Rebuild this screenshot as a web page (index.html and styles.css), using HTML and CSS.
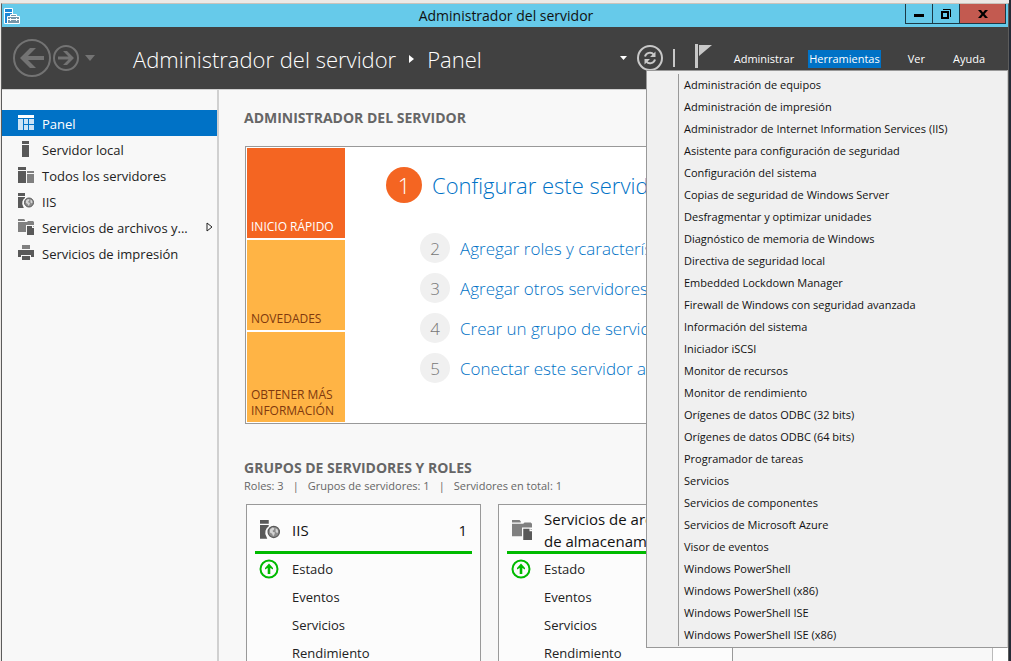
FILE: index.html
```html
<!DOCTYPE html>
<html lang="es">
<head>
<meta charset="utf-8">
<title>Administrador del servidor</title>
<link rel="stylesheet" href="styles.css">
</head>
<body>
<svg class="defs" aria-hidden="true">
  <symbol id="i-iis" viewBox="0 0 16 16">
    <path d="M0 0h7v3H0zM0 4h7v1a6 6 0 0 0-2 8l.8 2H0z" fill="#595959"/>
    <circle cx="11" cy="9.500" r="4.500" fill="#8c8c8c" stroke="#595959"/>
    <path d="M8 7.500l2-1.500 1.500.5-.5 1.500-1 .5.500 1 1.500.5-.5 1.500-1 1.500-.8-2-1.700-1zM12.500 6.500l1.500 1 .5 1.500-.5 1.500-1.500-1z" fill="#d4d4d4"/>
  </symbol>
  <symbol id="i-files" viewBox="0 0 16 16">
    <path d="M0 0h6l1 1v1H0zM0 3h9l1-1h5l1 1v3h-8v7H0z" fill="#808080"/>
    <path d="M9 7h5v2h2v7H9zM15 7l1 1h-1z" fill="#595959"/>
  </symbol>
  <symbol id="i-up" viewBox="0 0 20 20">
    <circle cx="10" cy="10" r="8.500" fill="none" stroke="#00ba00" stroke-width="2"/>
    <path d="M10 4.500l4 4.500v1.500l-2.700-1.500v6H8.700V9L6 10.500V9z" fill="#00ba00"/>
  </symbol>
</svg>
<div class="window">
  <header class="titlebar">
    <svg class="app-icon" viewBox="0 0 16 16" aria-hidden="true">
      <path d="M.5.500h8v15h-8z" fill="#1c87d6" stroke="#fff"/><path d="M1 4.500h7" stroke="#fff"/>
      <path d="M6.500 8.500V6.500h6v2M3.500 8.500h12v7h-12z" fill="#7896a8" stroke="#fff"/><path d="M4 11.500h11M6.500 10v3M12.500 10v3" stroke="#fff"/>
    </svg>
    <span class="caption">Administrador del servidor</span>
    <div class="controls">
      <button class="ctl" aria-label="Minimizar"><svg width="12" height="12"><path d="M1 6h10v3H1z"/></svg></button>
      <button class="ctl" aria-label="Restaurar"><svg width="12" height="12"><path d="M3 1.500h7.500V9" fill="none" stroke="#000"/><path d="M2 4h6v6H2z" fill="none" stroke="#000" stroke-width="2"/></svg></button>
      <button class="ctl close" aria-label="Cerrar"><svg width="12" height="12"><path d="M1 2h3l2 2.500L8 2h3L7.500 6 11 10H8L6 7.500 4 10H1l3.500-4z"/></svg></button>
    </div>
  </header>
  <div class="topbar">
    <div class="history">
      <button class="icon-btn" aria-label="Atrás"><svg width="38" height="38" viewBox="0 0 38 38"><circle cx="19" cy="19" r="18" fill="none" stroke="#737373" stroke-width="2"/><path d="M7 19L17 9h6l-8 8H31v4H15l8 8h-6z" fill="#737373"/></svg></button>
      <button class="icon-btn" aria-label="Adelante"><svg width="26" height="26" viewBox="0 0 26 26"><circle cx="13" cy="13" r="12" fill="none" stroke="#737373" stroke-width="2"/><path d="M21 13l-7 7h-4l5.500-5.500H5v-3h10.500L10 6h4z" fill="#737373"/></svg></button>
      <button class="icon-btn drop" aria-label="Historial"><svg width="10" height="6"><path d="M0 0h10L5 6z" fill="#737373"/></svg></button>
    </div>
    <div class="breadcrumb"><span>Administrador del servidor</span><svg width="5" height="8"><path d="M0 0l5 4-5 4z" fill="#fff"/></svg><span>Panel</span></div>
    <div class="tools">
      <button class="icon-btn" aria-label="Opciones"><svg width="7" height="4"><path d="M0 0h7L3.500 4z" fill="#fff"/></svg></button>
      <button class="icon-btn" aria-label="Actualizar"><svg width="26" height="26" viewBox="0 0 26 26"><circle cx="13" cy="13" r="12" fill="none" stroke="#c8c8c8" stroke-width="2"/><path d="M8 11.500c1-4 6.500-5 8.500-2M18 14.500c-1 4-6.500 5-8.500 2" fill="none" stroke="#c8c8c8" stroke-width="2"/><path d="M18.500 6.500v5.500H13zM7.500 19.500V14H13z" fill="#c8c8c8"/></svg></button>
      <span class="divider"></span>
      <button class="icon-btn flag" aria-label="Notificaciones"><svg width="17" height="24"><path d="M0 0h3v24H0zM4 1h13L4 12z" fill="#c8c8c8"/></svg></button>
    </div>
    <nav class="menubar">
      <button>Administrar</button><button class="open">Herramientas</button><button>Ver</button><button>Ayuda</button>
    </nav>
    <div class="dropdown">
      <ul>
        <li><a href="#">Administración de equipos</a></li>
        <li><a href="#">Administración de impresión</a></li>
        <li><a href="#">Administrador de Internet Information Services (IIS)</a></li>
        <li><a href="#">Asistente para configuración de seguridad</a></li>
        <li><a href="#">Configuración del sistema</a></li>
        <li><a href="#">Copias de seguridad de Windows Server</a></li>
        <li><a href="#">Desfragmentar y optimizar unidades</a></li>
        <li><a href="#">Diagnóstico de memoria de Windows</a></li>
        <li><a href="#">Directiva de seguridad local</a></li>
        <li><a href="#">Embedded Lockdown Manager</a></li>
        <li><a href="#">Firewall de Windows con seguridad avanzada</a></li>
        <li><a href="#">Información del sistema</a></li>
        <li><a href="#">Iniciador iSCSI</a></li>
        <li><a href="#">Monitor de recursos</a></li>
        <li><a href="#">Monitor de rendimiento</a></li>
        <li><a href="#">Orígenes de datos ODBC (32 bits)</a></li>
        <li><a href="#">Orígenes de datos ODBC (64 bits)</a></li>
        <li><a href="#">Programador de tareas</a></li>
        <li><a href="#">Servicios</a></li>
        <li><a href="#">Servicios de componentes</a></li>
        <li><a href="#">Servicios de Microsoft Azure</a></li>
        <li><a href="#">Visor de eventos</a></li>
        <li><a href="#">Windows PowerShell</a></li>
        <li><a href="#">Windows PowerShell (x86)</a></li>
        <li><a href="#">Windows PowerShell ISE</a></li>
        <li><a href="#">Windows PowerShell ISE (x86)</a></li>
      </ul>
    </div>
  </div>
  <div class="body">
    <nav class="sidebar">
      <a class="current" href="#"><svg width="16" height="16"><path d="M0 0h16v3H0z" fill="#fff"/><path d="M0 4h5v11H0zM6 4h4v5H6zM11 4h5v5h-5zM6 10h4v5H6zM11 10h5v5h-5z" fill="#cce3f5"/></svg><span>Panel</span></a>
      <a href="#"><svg width="16" height="16"><path d="M4 0h7v3H4zM4 4h7v12H4z" fill="#595959"/></svg><span>Servidor local</span></a>
      <a href="#"><svg width="16" height="16"><path d="M0 0h8v3H0zM0 4h8v12H0z" fill="#595959"/><path d="M9 4h7v2H9zM9 7h7v9H9z" fill="#808080"/></svg><span>Todos los servidores</span></a>
      <a href="#"><svg width="16" height="16"><use href="#i-iis"/></svg><span>IIS</span></a>
      <a href="#"><svg width="16" height="16"><use href="#i-files"/></svg><span>Servicios de archivos y...</span><svg class="expand" width="7" height="10"><path d="M1 1l5 4-5 4z" fill="none" stroke="#222"/></svg></a>
      <a href="#"><svg width="16" height="16"><path d="M4 0h8v4H4z" fill="#808080"/><path d="M0 5h16v7h-3v-2H3v2H0zM4 11h8v4H4z" fill="#595959"/></svg><span>Servicios de impresión</span></a>
    </nav>
    <main>
      <h1>ADMINISTRADOR DEL SERVIDOR</h1>
      <section class="welcome">
        <div class="tiles">
          <button class="tile active">INICIO RÁPIDO</button>
          <button class="tile">NOVEDADES</button>
          <button class="tile">OBTENER MÁS INFORMACIÓN</button>
        </div>
        <div class="steps">
          <a class="step first" href="#"><b>1</b><span>Configurar este servidor local</span></a>
          <a class="step" href="#"><b>2</b><span>Agregar roles y características</span></a>
          <a class="step" href="#"><b>3</b><span>Agregar otros servidores para administrar</span></a>
          <a class="step" href="#"><b>4</b><span>Crear un grupo de servidores</span></a>
          <a class="step" href="#"><b>5</b><span>Conectar este servidor a servicios en la nube</span></a>
        </div>
      </section>
      <h2>GRUPOS DE SERVIDORES Y ROLES</h2>
      <p class="summary"><span>Roles: 3</span><span>|</span><span>Grupos de servidores: 1</span><span>|</span><span>Servidores en total: 1</span></p>
      <div class="cards">
        <article class="card">
          <div class="card-head"><svg width="20" height="20"><use href="#i-iis"/></svg><h3>IIS</h3><span>1</span></div>
          <ul>
            <li><svg width="20" height="20"><use href="#i-up"/></svg><a href="#">Estado</a></li>
            <li><a href="#">Eventos</a></li><li><a href="#">Servicios</a></li><li><a href="#">Rendimiento</a></li>
          </ul>
        </article>
        <article class="card">
          <div class="card-head"><svg width="20" height="20"><use href="#i-files"/></svg><h3>Servicios de archivos y<br>de almacenamiento</h3><span>1</span></div>
          <ul>
            <li><svg width="20" height="20"><use href="#i-up"/></svg><a href="#">Estado</a></li>
            <li><a href="#">Eventos</a></li><li><a href="#">Servicios</a></li><li><a href="#">Rendimiento</a></li>
          </ul>
        </article>
      </div>
    </main>
    <div class="scroll-track"></div>
  </div>
</div>
</body>
</html>
```
FILE: styles.css
```css
* { box-sizing: border-box; }
body {
  margin: 0;
  height: 100vh;
  overflow: hidden;
  padding: 3px 2px 0 1px;
  background: linear-gradient(90deg, #ece9e6 0 50%, #252b36 50%);
  font-family: "Open Sans", "Noto Sans", sans-serif;
  color: #222;
}
a { color: inherit; text-decoration: none; }
button { font: inherit; border: 0; padding: 0; background: none; color: inherit; }
ul, h1, h2, h3, p { margin: 0; padding: 0; list-style: none; }
svg { display: block; flex: none; }
.defs { position: absolute; width: 0; height: 0; }
.window {
  display: flex;
  flex-direction: column;
  height: 100%;
  border: 1px solid #5c5c5c;
  border-top-color: #c9c3bc;
  border-bottom: 0;
  box-shadow: 0 -3px #ece9e6;
  background: #f8f8f8;
}
.titlebar {
  display: grid;
  grid-template-columns: 1fr auto 1fr;
  align-items: center;
  flex: none;
  height: 23px;
  background: #66caea;
  padding-left: 2px;
}
.app-icon { width: 16px; height: 16px; }
.caption { font-size: 14px; line-height: 22px; color: #111; }
.controls { display: flex; justify-content: flex-end; align-self: start; padding-right: 2px; }
.ctl {
  display: flex;
  align-items: center;
  justify-content: center;
  width: 28px;
  height: 20px;
  border: 1px solid #1b3a47;
  border-top: 0;
  margin-left: -1px;
}
.close { width: 47px; background: #c35a50; }
.topbar {
  position: relative;
  display: flex;
  align-items: center;
  flex: none;
  height: 63px;
  border-bottom: 1px solid #d0d0d0;
  background: #414141;
  color: #fff;
  padding: 0 22px 0 11px;
}
.history { display: flex; align-items: center; gap: 2px; }
.drop { margin-left: 4px; }
.breadcrumb { display: flex; align-items: center; gap: 13px; margin-left: 38px; padding-top: 2px; font-size: 22px; font-weight: 300; line-height: 32px; white-space: nowrap; }
.tools { display: flex; align-items: center; gap: 10px; margin-left: auto; }
.divider { width: 2px; height: 18px; background: #c8c8c8; }
.flag { margin: 0 21px 4px 10px; }
.menubar { display: flex; gap: 26px; padding-top: 2px; font-size: 11px; line-height: 18px; }
.menubar button { padding: 0 1px; }
.menubar .open { margin-left: -13px; background: #0072c6; }
.dropdown {
  position: absolute;
  z-index: 2;
  top: 43px;
  right: 0;
  width: 362px;
  padding: 3px 0 1px 31px;
  border: 1px solid #999;
  border-right-color: #ccc;
  background: #f0f0f0;
  color: #111;
}
.dropdown ul { border-left: 1px solid #999; }
.dropdown li { padding-left: 5px; font-size: 11px; line-height: 22px; white-space: nowrap; }
.body { display: flex; flex: 1; min-height: 0; }
.sidebar { flex: none; width: 217px; padding-top: 20px; border-right: 2px solid #d0d0d0; font-size: 13px; }
.sidebar a { display: flex; align-items: center; gap: 8px; height: 26px; padding: 0 4px 0 16px; white-space: nowrap; }
.sidebar span { padding-top: 2px; }
.sidebar .current { background: #0072c6; color: #fff; }
.expand { margin-left: auto; }
main { flex: 1; min-width: 0; overflow: hidden; padding: 18px 30px 0 25px; }
h1, h2 { font-size: 14px; line-height: 20px; font-weight: 700; color: #666; }
.welcome { display: flex; margin: 18px 0 34px 1px; padding: 1px; border: 1px solid #999; background: #fff; }
.tiles { display: grid; gap: 2px; width: 98px; }
.tile { display: flex; align-items: flex-end; height: 90px; padding: 3px 4px; background: #ffb445; color: #80390e; font-size: 12px; line-height: 16px; text-align: left; }
.active { background: #f46522; color: #fff; }
.steps { padding: 19px 0 0 41px; min-width: 0; }
.step { display: flex; align-items: center; gap: 10px; height: 30px; margin: 0 0 10px 34px; font-size: 17px; font-weight: 300; color: #0072c6; white-space: nowrap; }
.step b { display: flex; align-items: center; justify-content: center; width: 30px; height: 30px; border-radius: 50%; background: #f0f0f0; color: #777; font-weight: 300; }
.first { height: 36px; margin: 0 0 30px; font-size: 22px; }
.first b { width: 36px; height: 36px; background: #f46522; color: #fff; }
.summary { display: flex; gap: 9px; font-size: 11px; line-height: 16px; color: #666; white-space: nowrap; }
.cards { display: flex; gap: 17px; margin: 10px 0 0 2px; }
.card { flex: none; width: 235px; height: 300px; padding: 4px 8px; border: 1px solid #999; background: #fcfcfc; }
.card-head { display: flex; align-items: center; gap: 12px; height: 45px; padding: 0 5px; border-bottom: 3px solid #00ba00; font-size: 15px; line-height: 22px; color: #111; white-space: nowrap; }
.card-head h3 { flex: 1; min-width: 0; font: inherit; }
.card li { display: flex; align-items: center; gap: 13px; height: 28px; padding-left: 37px; font-size: 13px; }
.card li:first-child { padding-left: 4px; margin-top: 1px; }
.scroll-track { flex: none; width: 16px; border-left: 1px solid #bbb; background: #fff; }
```
